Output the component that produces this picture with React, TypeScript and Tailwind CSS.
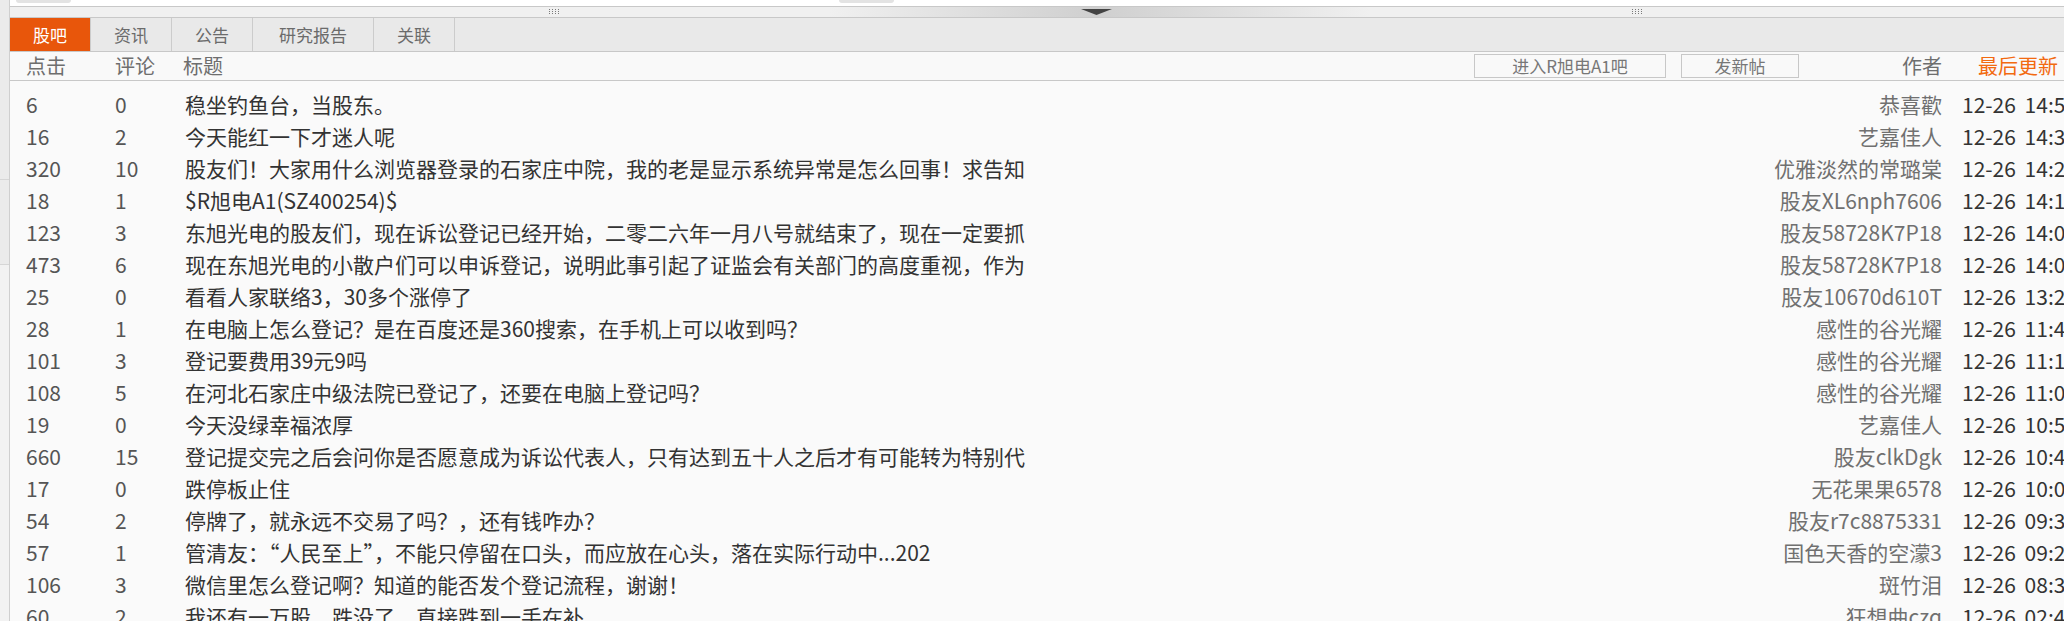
import React from 'react';

interface Post {
  clicks: string;
  comments: string;
  title: string;
  author: string;
  time: string;
}

const posts: Post[] = [
  { clicks: '6', comments: '0', title: '稳坐钓鱼台，当股东。', author: '恭喜歡', time: '12-26 14:52' },
  { clicks: '16', comments: '2', title: '今天能红一下才迷人呢', author: '艺嘉佳人', time: '12-26 14:36' },
  { clicks: '320', comments: '10', title: '股友们！大家用什么浏览器登录的石家庄中院，我的老是显示系统异常是怎么回事！求告知', author: '优雅淡然的常璐棠', time: '12-26 14:25' },
  { clicks: '18', comments: '1', title: '$R旭电A1(SZ400254)$', author: '股友XL6nph7606', time: '12-26 14:13' },
  { clicks: '123', comments: '3', title: '东旭光电的股友们，现在诉讼登记已经开始，二零二六年一月八号就结束了，现在一定要抓', author: '股友58728K7P18', time: '12-26 14:08' },
  { clicks: '473', comments: '6', title: '现在东旭光电的小散户们可以申诉登记，说明此事引起了证监会有关部门的高度重视，作为', author: '股友58728K7P18', time: '12-26 14:02' },
  { clicks: '25', comments: '0', title: '看看人家联络3，30多个涨停了', author: '股友10670d610T', time: '12-26 13:27' },
  { clicks: '28', comments: '1', title: '在电脑上怎么登记？是在百度还是360搜索，在手机上可以收到吗？', author: '感性的谷光耀', time: '12-26 11:45' },
  { clicks: '101', comments: '3', title: '登记要费用39元9吗', author: '感性的谷光耀', time: '12-26 11:18' },
  { clicks: '108', comments: '5', title: '在河北石家庄中级法院已登记了，还要在电脑上登记吗？', author: '感性的谷光耀', time: '12-26 11:03' },
  { clicks: '19', comments: '0', title: '今天没绿幸福浓厚', author: '艺嘉佳人', time: '12-26 10:57' },
  { clicks: '660', comments: '15', title: '登记提交完之后会问你是否愿意成为诉讼代表人，只有达到五十人之后才有可能转为特别代', author: '股友clkDgk', time: '12-26 10:42' },
  { clicks: '17', comments: '0', title: '跌停板止住', author: '无花果果6578', time: '12-26 10:06' },
  { clicks: '54', comments: '2', title: '停牌了，就永远不交易了吗？，还有钱咋办？', author: '股友r7c8875331', time: '12-26 09:31' },
  { clicks: '57', comments: '1', title: '管清友：“人民至上”，不能只停留在口头，而应放在心头，落在实际行动中...202', author: '国色天香的空濛3', time: '12-26 09:24' },
  { clicks: '106', comments: '3', title: '微信里怎么登记啊？知道的能否发个登记流程，谢谢！', author: '斑竹泪', time: '12-26 08:37' },
  { clicks: '60', comments: '2', title: '我还有一万股，跌没了，直接跌到一手在补', author: '狂想曲czq', time: '12-26 02:46' },
];

const tabs = [
  { label: '股吧', w: 'w-[81px]' },
  { label: '资讯', w: 'w-[81px]' },
  { label: '公告', w: 'w-[81px]' },
  { label: '研究报告', w: 'w-[121px]' },
  { label: '关联', w: 'w-[81px]' },
];

// little 4x3 dotted handle on the splitter
const Grip = () => (
  <svg width="11" height="6" viewBox="0 0 11 6">
    {[0, 1, 2].map((r) =>
      [0, 1, 2, 3].map((c) => (
        <rect key={`${r}-${c}`} x={c * 3} y={r * 2} width="1" height="1" fill="#7a7a7a" />
      ))
    )}
  </svg>
);

export default function App() {
  return (
    <div className="w-[2064px] h-[621px] overflow-hidden flex bg-white font-['Noto_Sans_CJK_SC','Noto_Sans',sans-serif]">
      <div className="w-[10px] shrink-0 border-r border-[#cfcfcf] bg-[#ebebeb] flex flex-col">
        <div className="h-[180px] border-b border-[#d6d6d6]" />
        <div className="h-[85px] border-b border-[#d6d6d6]" />
        <div className="flex-1 bg-[#f2f2f2]" />
      </div>

      <div className="flex-1 min-w-0 flex flex-col">
        {/* top strip */}
        <div className="h-[7px] shrink-0 border-b border-[#c8c8c8] flex items-start">
          <div className="ml-[6px] w-[55px] h-[3px] rounded-b-[3px] bg-[#e3e3e3]" />
          <div className="ml-[768px] w-[55px] h-[3px] rounded-b-[3px] bg-[#e3e3e3]" />
        </div>

        {/* splitter */}
        <div className="relative h-[11px] shrink-0 border-b border-[#c8c8c8] bg-[linear-gradient(to_right,#f0f0f0_820px,#cfcfcf_1086px,#f0f0f0_1360px)]">
          <div className="absolute left-[539px] top-[2px]"><Grip /></div>
          <div className="absolute left-[1622px] top-[2px]"><Grip /></div>
          <svg className="absolute left-[1071px] top-[2px]" width="31" height="6" viewBox="0 0 31 6">
            <path d="M0 0H31L15.5 6Z" fill="#434343" />
          </svg>
        </div>

        {/* tabs */}
        <div className="h-[34px] shrink-0 border-b border-[#c8c8c8] bg-[#e9e9e9] flex">
          {tabs.map((t, i) => (
            <div
              key={t.label}
              className={`${t.w} h-full shrink-0 border-r border-[#cccccc] flex items-center justify-center text-[17px] ${
                i === 0 ? 'bg-[#e8560b] text-white' : 'text-[#6b6b6b]'
              }`}
            >
              {t.label}
            </div>
          ))}
        </div>

        {/* header */}
        <div className="h-[29px] shrink-0 border-b border-[#c8c8c8] bg-[#f9f9f9] flex items-center text-[20px] text-[#6e6e6e] whitespace-nowrap">
          <div className="w-[105px] pl-[16px] shrink-0">点击</div>
          <div className="w-[68px] shrink-0">评论</div>
          <div className="flex-1">标题</div>
          <div className="w-[192px] h-[24px] shrink-0 border border-[#c8c8c8] flex items-center justify-center text-[17px] text-[#777]">
            进入R旭电A1吧
          </div>
          <div className="ml-[15px] w-[118px] h-[24px] shrink-0 border border-[#c8c8c8] flex items-center justify-center text-[17px] text-[#777]">
            发新帖
          </div>
          <div className="w-[143px] shrink-0 text-right">作者</div>
          <div className="w-[122px] pl-[36px] shrink-0 text-[#f26a10]">最后更新</div>
        </div>

        {/* rows */}
        <div className="flex-1 bg-[#fafafa] pt-[8px] text-[21px] whitespace-nowrap">
          {posts.map((p, i) => (
            <div key={i} className="h-[32px] flex items-center">
              <div className="w-[105px] pl-[16px] shrink-0 text-[#555]">{p.clicks}</div>
              <div className="w-[70px] shrink-0 text-[#555]">{p.comments}</div>
              <div className="flex-1 min-w-0 text-[#333]">{p.title}</div>
              <div className="w-[320px] pr-[20px] shrink-0 text-right text-[#707070]">{p.author}</div>
              <div className="w-[102px] shrink-0 text-[#333] [word-spacing:4px]">{p.time}</div>
            </div>
          ))}
        </div>
      </div>
    </div>
  );
}
